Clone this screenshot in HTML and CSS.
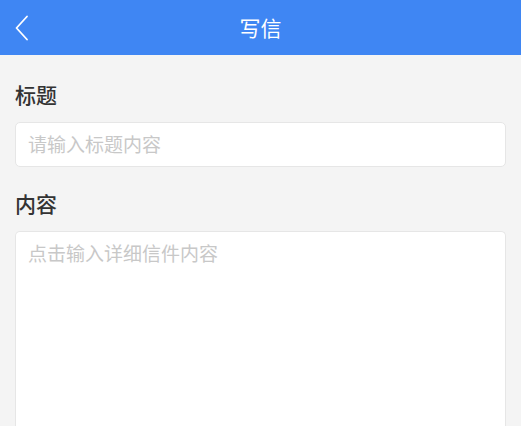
FILE: index.html
```html
<!DOCTYPE html>
<html lang="zh-CN">
<head>
<meta charset="utf-8">
<title>写信</title>
<link rel="stylesheet" href="styles.css">
</head>
<body>
<header class="bar">
  <span class="back">
    <svg width="14" height="26" viewBox="0 0 14 26"><path d="M12 1.5 L1.5 13 L12 24.5" fill="none" stroke="#fff" stroke-width="1.8" stroke-linecap="round" stroke-linejoin="round"/></svg>
  </span>
  <h1 class="title">写信</h1>
</header>
<main class="form">
  <div class="label">标题</div>
  <div class="input"><span class="ph">请输入标题内容</span></div>
  <div class="label label2">内容</div>
  <div class="textarea"><span class="ph">点击输入详细信件内容</span></div>
</main>
</body>
</html>
```
FILE: styles.css
```css
html, body { margin: 0; padding: 0; }
body {
  background: #f4f4f4;
  font-family: "Noto Sans CJK SC", "Noto Sans", sans-serif;
  width: 521px;
  height: 426px;
  overflow: hidden;
  display: flex;
  flex-direction: column;
}
.bar {
  position: relative;
  flex: none;
  height: 55px;
  background: #3f86f3;
  display: flex;
  align-items: center;
  justify-content: center;
}
.back {
  position: absolute;
  left: 15px;
  top: 15px;
  width: 14px;
  height: 26px;
}
.back svg { display: block; }
.title {
  margin: 0;
  font-size: 21px;
  font-weight: 400;
  color: #fff;
  line-height: 1;
}
.form {
  flex: 1;
  min-height: 0;
  padding: 0 15px;
  display: flex;
  flex-direction: column;
}
.label {
  font-size: 21px;
  font-weight: 500;
  color: #333;
  line-height: 1;
  margin-top: 29px;
  margin-bottom: 17px;
}
.label2 { margin-top: 26px; }
.input, .textarea {
  background: #fff;
  border: 1px solid #e6e6e6;
  border-radius: 5px;
  box-sizing: border-box;
  padding: 0 12px;
  font-size: 19px;
  font-weight: 400;
  color: #c8c8c8;
}
.input {
  flex: none;
  height: 45px;
  display: flex;
  align-items: center;
}
.textarea {
  flex: 1;
  padding-top: 7px;
  border-bottom: none;
  border-radius: 5px 5px 0 0;
}
.ph { line-height: 1.2; }
```
